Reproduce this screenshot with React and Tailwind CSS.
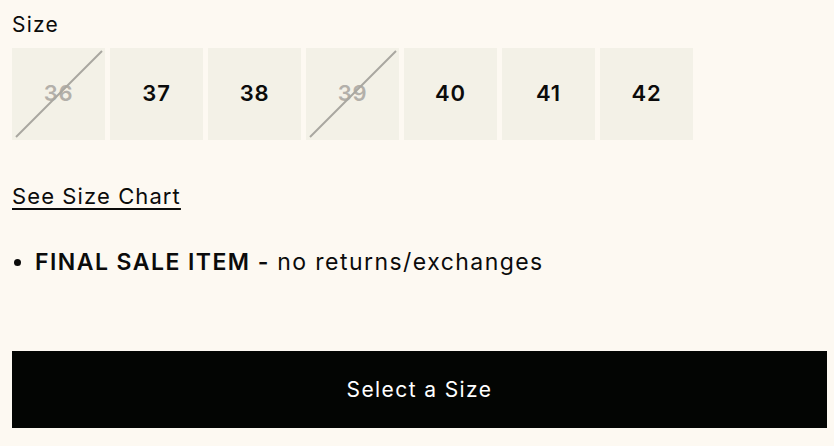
import React from "react";

const sizes = [
  { n: "36", out: true },
  { n: "37", out: false },
  { n: "38", out: false },
  { n: "39", out: true },
  { n: "40", out: false },
  { n: "41", out: false },
  { n: "42", out: false },
];

export default function App() {
  return (
    <div
      className="w-[834px] h-[446px] bg-[#fdf9f2] text-[#0b0b0b] overflow-hidden"
      style={{ fontFamily: "Inter, 'Liberation Sans', sans-serif" }}
    >
      <div className="px-[12px] pt-[11px]">
        <div className="text-[21px] leading-[28px] tracking-[1.2px]">Size</div>
        <div className="flex gap-[5px] mt-[9px]">
          {sizes.map((s) => (
            <div
              key={s.n}
              className="relative w-[93px] h-[92px] bg-[#f3f1e7] flex items-center justify-center"
            >
              <span
                className={
                  "text-[22px] leading-[28px] font-semibold tracking-[0.8px] -mt-[2px] " +
                  (s.out ? "text-[#b3b0aa]" : "text-[#0b0b0b]")
                }
              >
                {s.n}
              </span>
              {s.out && (
                <svg
                  className="absolute inset-0"
                  width="93"
                  height="92"
                  viewBox="0 0 93 92"
                >
                  <line x1="4" y1="89" x2="90" y2="3" stroke="#a9a7a0" strokeWidth="2" />
                </svg>
              )}
            </div>
          ))}
        </div>
        <div className="mt-[42px]">
          <a className="text-[22px] leading-[28px] underline underline-offset-[4px] decoration-[2px] tracking-[1.1px]">
            See Size Chart
          </a>
        </div>
        <div className="mt-[38px] flex items-center text-[23px] leading-[28px] tracking-[1.45px]">
          <span className="w-[7px] h-[7px] rounded-full bg-[#0b0b0b] ml-[2px] mr-[14px]"></span>
          <span>
            <span className="font-semibold">FINAL SALE ITEM - </span>no returns/exchanges
          </span>
        </div>
        <button className="mt-[75px] w-[815px] h-[77px] bg-[#030503] text-white text-[21px] tracking-[1.4px] flex items-center justify-center">
          Select a Size
        </button>
      </div>
    </div>
  );
}
